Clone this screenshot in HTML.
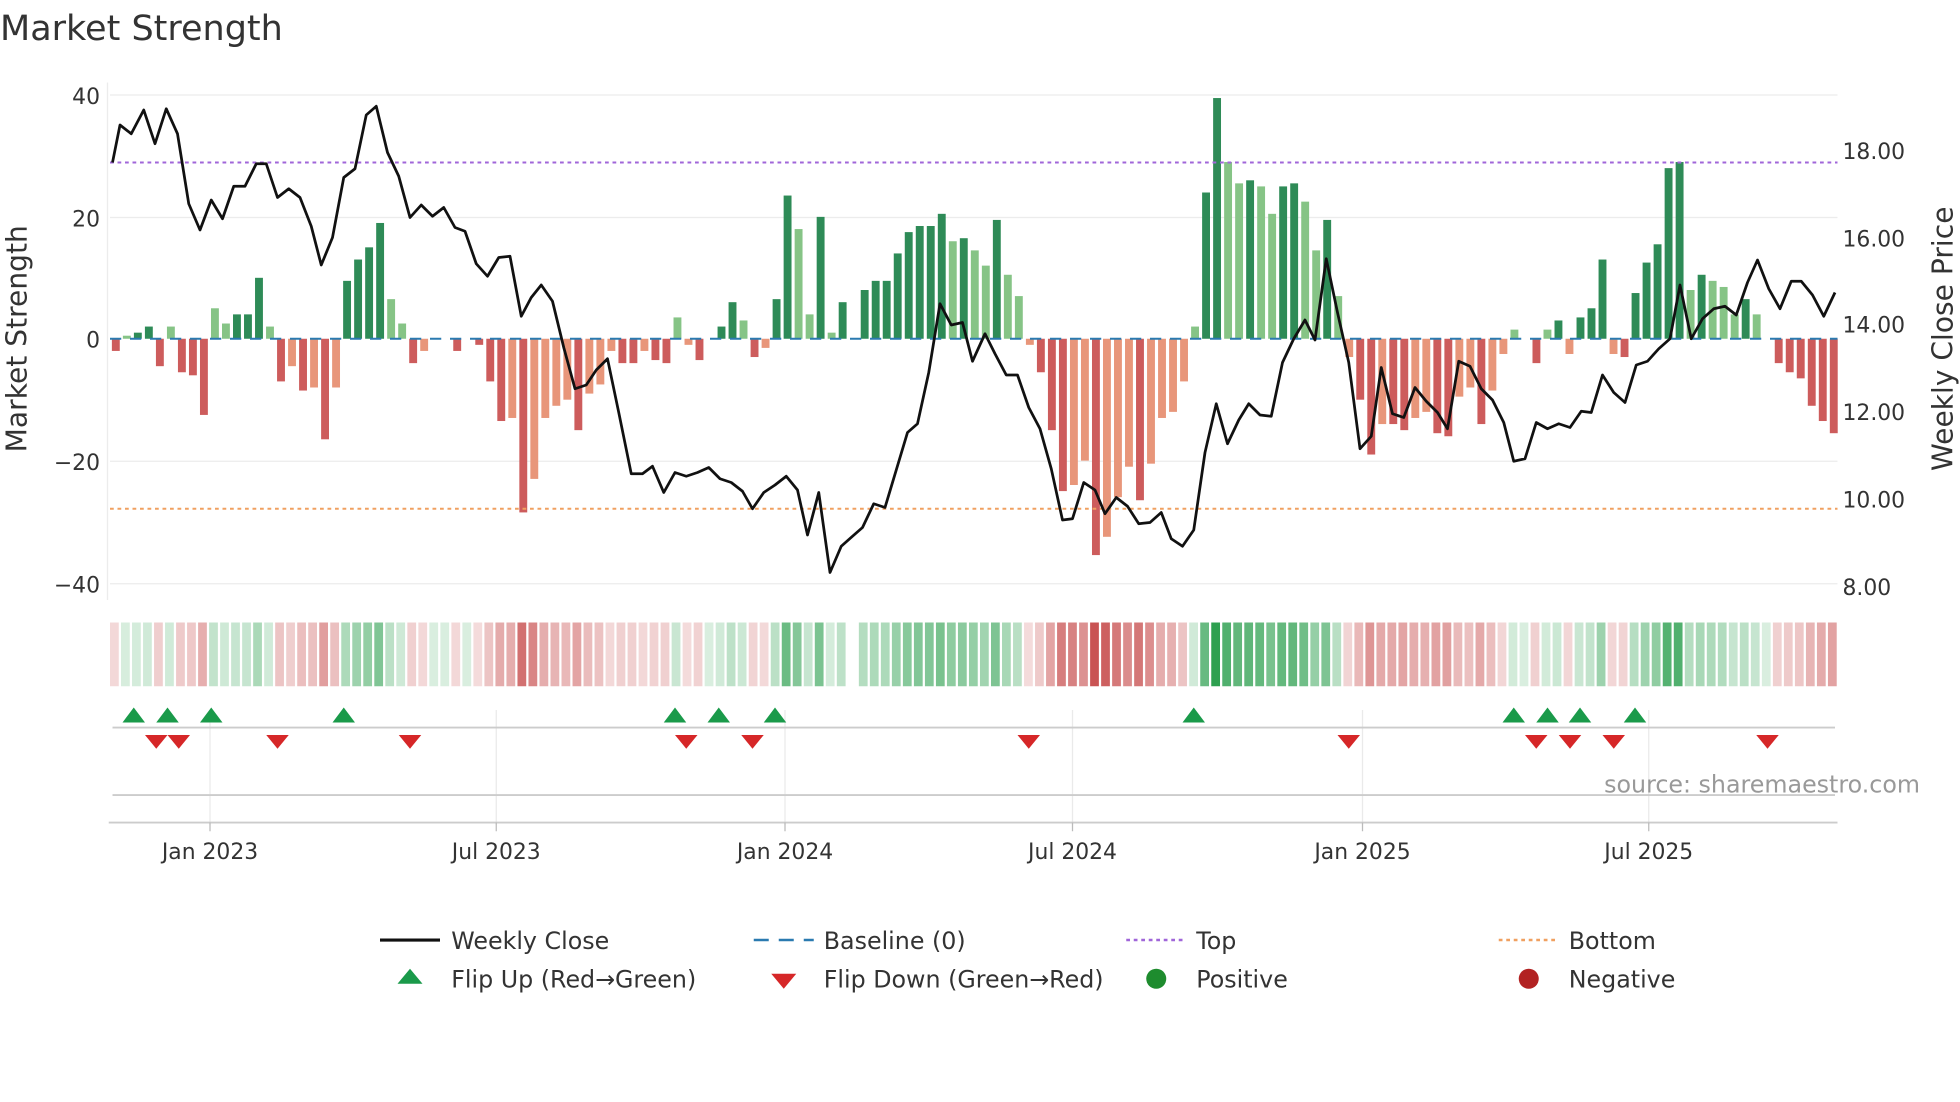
<!DOCTYPE html>
<html><head><meta charset="utf-8"><style>
html,body{margin:0;padding:0;background:#fff;}
svg{display:block;font-family:"DejaVu Sans","Liberation Sans",sans-serif;}
</style></head><body>
<svg id="s" width="1960" height="1102" viewBox="0 0 1568 881.6" xmlns="http://www.w3.org/2000/svg">
<rect width="1568" height="882" fill="#fff"/>
<text x="0" y="32" font-size="28" fill="#333">Market Strength</text>
<g stroke="#ececec" stroke-width="1">
<line x1="88" y1="76" x2="1470" y2="76"/><line x1="88" y1="174" x2="1470" y2="174"/>
<line x1="88" y1="369" x2="1470" y2="369"/><line x1="88" y1="467" x2="1470" y2="467"/>
<line x1="86" y1="66" x2="86" y2="480"/>
</g>
<g font-size="17.5" fill="#333" text-anchor="end">
<text x="80" y="83">40</text><text x="80" y="181">20</text><text x="80" y="278">0</text>
<text x="80" y="376">−20</text><text x="80" y="474">−40</text>
</g>
<g font-size="17.5" fill="#333">
<text x="1474" y="127">18.00</text><text x="1474" y="197">16.00</text><text x="1474" y="266">14.00</text>
<text x="1474" y="336">12.00</text><text x="1474" y="406">10.00</text><text x="1474" y="476">8.00</text>
</g>
<text transform="translate(21,271) rotate(-90)" font-size="22.5" fill="#333" text-anchor="middle">Market Strength</text>
<text transform="translate(1562,271) rotate(-90)" font-size="22.5" fill="#333" text-anchor="middle">Weekly Close Price</text>
<g id="bars"></g>
<line x1="88" y1="130" x2="1470" y2="130" stroke="#a066d9" stroke-width="1.6" stroke-dasharray="3,3"/>
<line x1="88" y1="407" x2="1470" y2="407" stroke="#f0a060" stroke-width="1.6" stroke-dasharray="3,3"/>
<line x1="88" y1="271" x2="1470" y2="271" stroke="#2a7ab0" stroke-width="1.6" stroke-dasharray="9,7"/>
<polyline id="price" fill="none" stroke="#111" stroke-width="2.2" stroke-linejoin="round"/>
<g id="heat"></g>
<g stroke="#eaeaea" stroke-width="1">
<line x1="168" y1="568" x2="168" y2="660"/><line x1="397" y1="568" x2="397" y2="660"/>
<line x1="628" y1="568" x2="628" y2="660"/><line x1="858" y1="568" x2="858" y2="660"/>
<line x1="1090" y1="568" x2="1090" y2="660"/><line x1="1319" y1="568" x2="1319" y2="660"/>
</g>
<line x1="90" y1="582" x2="1468" y2="582" stroke="#ccc" stroke-width="1.5"/>
<line x1="90" y1="636" x2="1468" y2="636" stroke="#ccc" stroke-width="1.5"/>
<line x1="87" y1="658" x2="1470" y2="658" stroke="#ccc" stroke-width="1.5"/>
<g stroke="#bbb" stroke-width="1">
<line x1="168" y1="658" x2="168" y2="665"/><line x1="397" y1="658" x2="397" y2="665"/>
<line x1="628" y1="658" x2="628" y2="665"/><line x1="858" y1="658" x2="858" y2="665"/>
<line x1="1090" y1="658" x2="1090" y2="665"/><line x1="1319" y1="658" x2="1319" y2="665"/>
</g>
<g id="marks"></g>
<text x="1536" y="634" font-size="19" fill="#999" text-anchor="end">source: sharemaestro.com</text>
<g font-size="17.5" fill="#333" text-anchor="middle">
<text x="168" y="687">Jan 2023</text><text x="397" y="687">Jul 2023</text><text x="628" y="687">Jan 2024</text>
<text x="858" y="687">Jul 2024</text><text x="1090" y="687">Jan 2025</text><text x="1319" y="687">Jul 2025</text>
</g>
<g font-size="19" fill="#333">
<line x1="304" y1="752" x2="352" y2="752" stroke="#111" stroke-width="2.5"/>
<text x="361" y="759">Weekly Close</text>
<line x1="603" y1="752" x2="651" y2="752" stroke="#2a7ab0" stroke-width="2" stroke-dasharray="12,8"/>
<text x="659" y="759">Baseline (0)</text>
<line x1="901" y1="752" x2="946" y2="752" stroke="#a066d9" stroke-width="2" stroke-dasharray="3,3"/>
<text x="957" y="759">Top</text>
<line x1="1199" y1="752" x2="1244" y2="752" stroke="#f0a060" stroke-width="2" stroke-dasharray="3,3"/>
<text x="1255" y="759">Bottom</text>
<polygon points="328,775 338,787 318,787" fill="#1a9a4a"/>
<text x="361" y="790">Flip Up (Red→Green)</text>
<polygon points="617,779 637,779 627,791" fill="#d62728"/>
<text x="659" y="790">Flip Down (Green→Red)</text>
<circle cx="925" cy="783" r="8" fill="#1e8c2e"/>
<text x="957" y="790">Positive</text>
<circle cx="1223" cy="783" r="8" fill="#b22222"/>
<text x="1255" y="790">Negative</text>
</g>
</svg>
<script>
var v=[-2,0.5,1,2,-4.5,2,-5.5,-6,-12.5,5,2.5,4,4,10,2,-7,-4.5,-8.5,-8,-16.5,-8,9.5,13,15,19,6.5,2.5,-4,-2,0,0,-2,0,-1,-7,-13.5,-13,-28.5,-23,-13,-11,-10,-15,-9,-7.5,-2,-4,-4,-2,-3.5,-4,3.5,-1,-3.5,0,2,6,3,-3,-1.5,6.5,23.5,18,4,20,1,6,0,8,9.5,9.5,14,17.5,18.5,18.5,20.5,16,16.5,14.5,12,19.5,10.5,7,-1,-5.5,-15,-25,-24,-20,-35.5,-32.5,-26,-21,-26.5,-20.5,-13,-12,-7,2,24,39.5,29,25.5,26,25,20.5,25,25.5,22.5,14.5,19.5,7,-3,-10,-19,-14,-14,-15,-13,-12,-15.5,-16,-9.5,-8,-14,-8.5,-2.5,1.5,0,-4,1.5,3,-2.5,3.5,5,13,-2.5,-3,7.5,12.5,15.5,28,29,8,10.5,9.5,8.5,4,6.5,4,0,-4,-5.5,-6.5,-11,-13.5,-15.5];
var NS="http://www.w3.org/2000/svg",step=8.81,x0=88;
function el(t,a,p){var e=document.createElementNS(NS,t);for(var k in a)e.setAttribute(k,a[k]);p.appendChild(e);return e;}
var bars=document.getElementById('bars'),heat=document.getElementById('heat');
for(var i=0;i<v.length;i++){
 var x=x0+i*step+1.5,w=step-2.5,val=v[i],prev=i?v[i-1]:0,c;
 var strong=Math.abs(val)>=Math.abs(prev);
 if(val>0)c=strong?'#2e8b57':'#86c486';else c=strong?'#cd5c5c':'#e8967a';
 if(val!==0){var y=271-val*4.875;el('rect',{x:x,y:Math.min(y,271),width:w,height:Math.abs(val*4.875),fill:c},bars);}
 var a=Math.min(1,0.18+Math.abs(val)/40*0.9),hc=val>=0?'rgba(46,160,80,'+a+')':'rgba(200,80,80,'+a+')';
 if(val===0&&i==67)hc='#fff';
 el('rect',{x:x0+i*step,y:498,width:step-1.8,height:51,fill:hc},heat);
}
var p=[[90,130],[96,100],[105,107],[115,88],[124,115],[133,87],[142,107],[151,163],[160,184],[169,160],[178,175],[187,149],[196,149],[205,131],[213,131],[222,158],[231,151],[240,158],[249,181],[257,212],[266,190],[275,142],[284,135],[293,92],[301,85],[310,122],[319,141],[328,174],[337,164],[346,173],[355,166],[364,182],[372,185],[381,211],[390,221],[399,206],[408,205],[417,253],[425,238],[433,228],[442,241],[451,278],[460,311],[469,308],[477,296],[486,287],[495,330],[505,379],[514,379],[522,373],[531,394],[540,378],[549,381],[558,378],[567,374],[576,383],[585,386],[594,393],[602,407],[611,394],[620,388],[629,381],[638,392],[646,428],[655,394],[664,458],[673,437],[682,429],[690,422],[699,403],[708,406],[717,376],[726,346],[734,339],[743,298],[752,243],[761,260],[770,258],[778,289],[788,267],[796,283],[805,300],[814,300],[823,326],[832,343],[841,375],[850,416],[858,415],[867,386],[876,392],[884,411],[893,398],[902,405],[911,419],[920,418],[929,410],[937,431],[946,437],[955,424],[964,362],[973,323],[982,355],[991,336],[999,323],[1008,332],[1017,333],[1026,290],[1035,271],[1044,256],[1052,272],[1061,207],[1070,250],[1079,290],[1088,359],[1097,349],[1105,294],[1114,331],[1123,334],[1132,310],[1141,321],[1150,330],[1158,343],[1167,289],[1176,293],[1185,311],[1194,320],[1203,338],[1211,369],[1220,367],[1229,338],[1238,343],[1247,339],[1256,342],[1265,329],[1273,330],[1282,300],[1291,314],[1300,322],[1309,292],[1318,289],[1327,279],[1336,271],[1344,228],[1353,271],[1362,255],[1371,247],[1380,245],[1389,252],[1398,226],[1406,208],[1415,231],[1424,247],[1433,225],[1441,225],[1450,236],[1459,253],[1468,234]];
document.getElementById('price').setAttribute('points',p.map(function(q){return q.join(',')}).join(' '));
var m=document.getElementById('marks');
[107,134,169,275,540,575,620,955,1211,1238,1264,1308].forEach(function(x){el('polygon',{points:x+',566 '+(x+9)+',578 '+(x-9)+',578',fill:'#1a9a4a'},m);});
[125,143,222,328,549,602,823,1079,1229,1256,1291,1414].forEach(function(x){el('polygon',{points:(x-9)+',588 '+(x+9)+',588 '+x+',599',fill:'#d62728'},m);});
</script>
</body></html>
